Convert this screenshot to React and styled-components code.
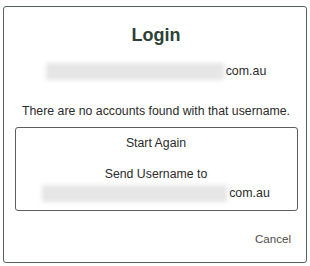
import styled, { createGlobalStyle } from "styled-components";

const Global = createGlobalStyle`
  body {
    margin: 0;
    background: #fff;
    font-family: "Liberation Sans", Arial, sans-serif;
    color: #2b2b2b;
  }
`;

const Dialog = styled.div`
  box-sizing: border-box;
  width: 304px;
  height: 257px;
  margin: 6px 0 0 3px;
  border: 1px solid #51635a;
  border-radius: 3px;
  padding: 17px 9px 0 11px;
  display: flex;
  flex-direction: column;
  align-items: center;
`;

const Title = styled.h1`
  margin: 0;
  font-size: 18px;
  line-height: 22px;
  font-weight: bold;
  color: #2c4236;
`;

const EmailRow = styled.div`
  display: flex;
  align-items: center;
  justify-content: center;
  margin-top: ${(p) => p.$top || 0}px;
  font-size: 12.4px;
  line-height: 19px;
`;

const Blur = styled.span`
  display: inline-block;
  width: ${(p) => p.$w}px;
  height: 17px;
  margin-right: 2px;
  background: #e6e6e6;
  filter: blur(2px);
`;

const Message = styled.p`
  margin: 22px 0 0;
  font-size: 12.3px;
  line-height: 17px;
  white-space: nowrap;
`;

const Options = styled.div`
  box-sizing: border-box;
  width: 283px;
  height: 84px;
  margin-top: 7px;
  border: 1px solid #5a5f5c;
  border-radius: 3px;
  display: flex;
  flex-direction: column;
  align-items: center;
  padding-top: 7px;
  font-size: 12.3px;
  line-height: 17px;
`;

const Option = styled.div`
  text-align: center;
  margin-top: ${(p) => p.$top || 0}px;
`;

const Footer = styled.div`
  align-self: stretch;
  display: flex;
  justify-content: flex-end;
  margin-top: 20px;
  padding-right: 6px;
`;

const Cancel = styled.button`
  background: none;
  border: none;
  padding: 0;
  font-family: inherit;
  font-size: 11.6px;
  line-height: 16px;
  color: #4d4d4d;
  cursor: pointer;
`;

export default function App() {
  return (
    <>
      <Global />
      <Dialog>
        <Title>Login</Title>
        <EmailRow $top={16}>
          <Blur $w={178} />
          <span>com.au</span>
        </EmailRow>
        <Message>There are no accounts found with that username.</Message>
        <Options>
          <Option>Start Again</Option>
          <Option $top={14}>Send Username to</Option>
          <EmailRow $top={1}>
            <Blur $w={185} />
            <span>com.au</span>
          </EmailRow>
        </Options>
        <Footer>
          <Cancel>Cancel</Cancel>
        </Footer>
      </Dialog>
    </>
  );
}
